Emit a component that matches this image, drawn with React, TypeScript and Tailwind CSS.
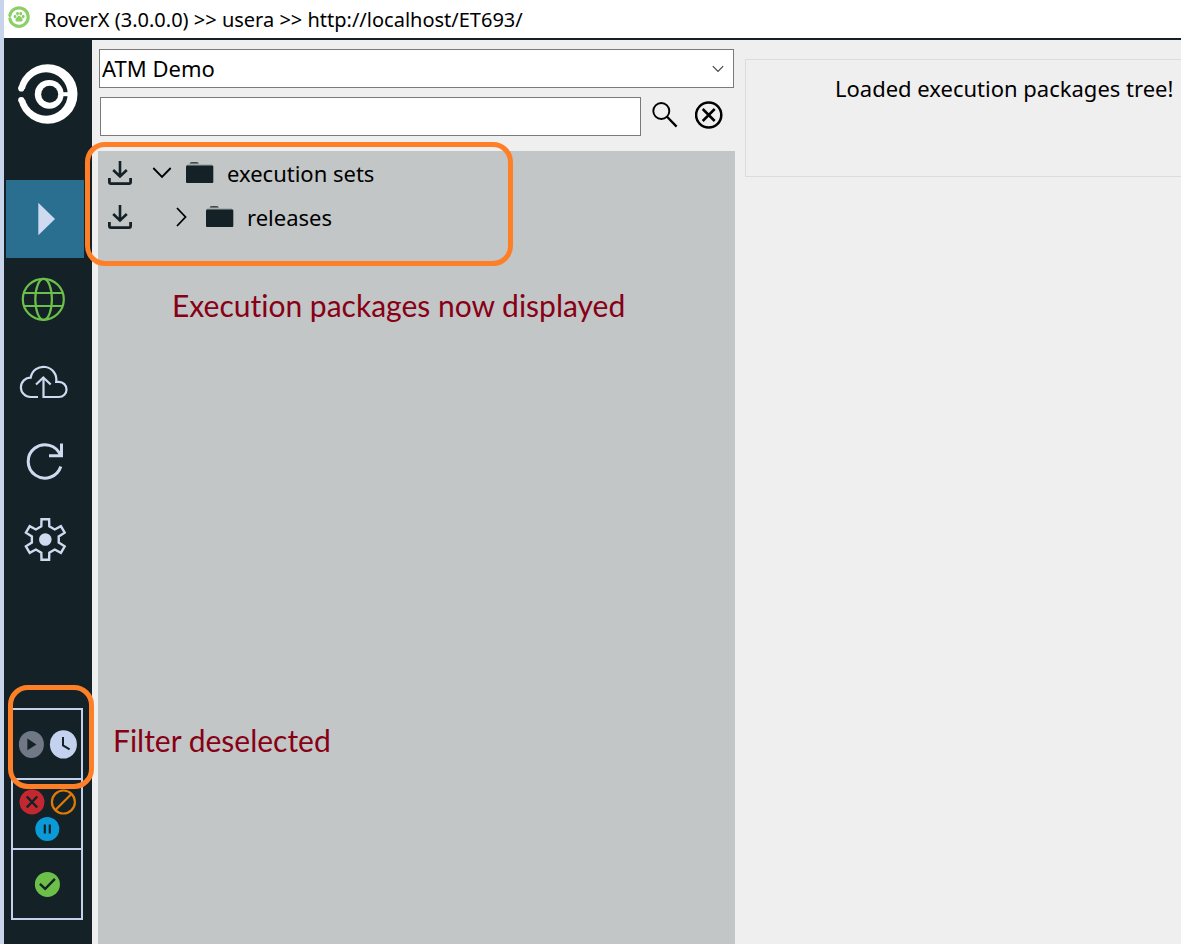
import { useState, type ReactNode } from 'react';

function PawIcon() {
  return (
    <svg width="22" height="22" viewBox="0 0 22 22" aria-hidden="true">
      <path d="M1.9 9.4A9.2 9.2 0 1 1 1.9 12.8" fill="none" stroke="#8ccf66" strokeWidth="3.2" strokeLinecap="round" />
      <g fill="#8ccf66">
        <ellipse cx="7" cy="10.6" rx="1.4" ry="1.8" />
        <ellipse cx="9.5" cy="7.6" rx="1.4" ry="1.9" />
        <ellipse cx="12.7" cy="7.6" rx="1.4" ry="1.9" />
        <ellipse cx="15.2" cy="10.6" rx="1.4" ry="1.8" />
        <path d="M11.1 10c1.9 0 3.6 2.6 3.6 4.1 0 1.9-2.1 1.5-3.6 1.5s-3.6.4-3.6-1.5c0-1.5 1.7-4.1 3.6-4.1z" />
      </g>
    </svg>
  );
}

function LogoIcon() {
  return (
    <svg width="60" height="60" viewBox="0 0 60 60" aria-hidden="true">
      <circle cx="29.7" cy="30" r="29.8" fill="#fff" />
      <circle cx="28" cy="30" r="21.7" fill="#142126" />
      <path d="M-1 25H8.5V35.5H-1z" fill="#142126" />
      <circle cx="3.3" cy="24.4" r="3.1" fill="#fff" />
      <circle cx="3.3" cy="36" r="3.1" fill="#fff" />
      <circle cx="31.2" cy="30.3" r="14.4" fill="#fff" />
      <path d="M44 28.2H51V32.2H44z" fill="#fff" />
      <circle cx="31.7" cy="30.3" r="8.5" fill="#142126" />
    </svg>
  );
}

function NavIcon({ children }: { children: ReactNode }) {
  return (
    <svg className="size-full" viewBox="0 0 78 78" fill="none" aria-hidden="true">
      {children}
    </svg>
  );
}

// six teeth, each the same profile turned by 60 degrees
const gearPoints = Array.from({ length: 6 })
  .flatMap((_, i) => {
    const a = (i * Math.PI) / 3;
    return [[-4, -13.2], [-3.8, -20.2], [3.8, -20.2], [4, -13.2]].map(
      ([x, y]) => `${39.3 + x * Math.cos(a) - y * Math.sin(a)},${39.5 + x * Math.sin(a) + y * Math.cos(a)}`
    );
  })
  .join(' ');

const navItems = [
  {
    id: 'run',
    label: 'Run',
    icon: <path d="M32.3 22.7L49 39L32.3 55.3z" fill="#cddaf0" />,
  },
  {
    id: 'web',
    label: 'Web',
    icon: (
      <g stroke="#6cc04a" strokeWidth="2.2">
        <circle cx="37.3" cy="39.3" r="20.5" />
        <ellipse cx="37.6" cy="39.3" rx="8.3" ry="20.5" />
        <path d="M18 33H57M18 46H57" />
      </g>
    ),
  },
  {
    id: 'upload',
    label: 'Upload',
    icon: (
      <g stroke="#cddaf0" strokeWidth="2.2">
        <path d="M32 57H24.5A9.7 9.7 0 0 1 24.7 37.6A12.9 12.9 0 1 1 50.2 41.9H53A7.5 7.5 0 0 1 53 57H37.5V38" />
        <path d="M30 44.5L37.3 37.5L44.7 44.5" />
      </g>
    ),
  },
  {
    id: 'refresh',
    label: 'Refresh',
    icon: (
      <g stroke="#cddaf0" strokeWidth="3">
        <path d="M54.8 46.5A16.7 16.7 0 1 1 54.5 35.5" />
        <path d="M55.5 23.5V35.7H43" />
      </g>
    ),
  },
  {
    id: 'settings',
    label: 'Settings',
    icon: (
      <g>
        <polygon points={gearPoints} stroke="#cddaf0" strokeWidth="2.4" />
        <circle cx="39.3" cy="39.5" r="6.3" fill="#cddaf0" />
      </g>
    ),
  },
];

function StatusIcon({ children }: { children: ReactNode }) {
  return (
    <svg width="26" height="26" viewBox="0 0 26 26" fill="none" overflow="visible" aria-hidden="true">
      {children}
    </svg>
  );
}

function StatusFilters() {
  return (
    <div className="relative w-[72px]">
      <div className="border-2 border-[#c3d1ec]">
        <button type="button" aria-label="Running and waiting" className="flex h-[70px] w-full items-center justify-center gap-1.5 border-b-2 border-[#c3d1ec]">
          <StatusIcon>
            <ellipse cx="13.4" cy="13.4" rx="12.5" ry="13.5" fill="#6f7884" />
            <path d="M9.4 7.6L18.4 13.4L9.4 19.2z" fill="#142126" />
          </StatusIcon>
          <StatusIcon>
            <ellipse cx="13.4" cy="13.4" rx="13.5" ry="14.2" fill="#c5d2ef" />
            <path d="M13 6V14.4L19.6 18.4" stroke="#142126" strokeWidth="2" />
          </StatusIcon>
        </button>
        <button type="button" aria-label="Failed, blocked and paused" className="flex h-[70px] w-full flex-wrap content-center justify-center gap-x-1.5 border-b-2 border-[#c3d1ec]">
          <StatusIcon>
            <circle cx="14" cy="14" r="12.5" fill="#c1282f" />
            <path d="M8.8 8.5L19.2 19.5M19.2 8.5L8.8 19.5" stroke="#142126" strokeWidth="2.4" />
          </StatusIcon>
          <StatusIcon>
            <circle cx="13.4" cy="14" r="11.5" stroke="#de7b06" strokeWidth="2.2" />
            <path d="M5.4 22L21.4 6" stroke="#de7b06" strokeWidth="2.2" />
          </StatusIcon>
          <StatusIcon>
            <circle cx="13.3" cy="15" r="12" fill="#0a9ad8" />
            <path d="M10.8 10.5V19.5M15.8 10.5V19.5" stroke="#142126" strokeWidth="2.2" />
          </StatusIcon>
        </button>
        <button type="button" aria-label="Passed" className="flex h-[68px] w-full items-center justify-center">
          <StatusIcon>
            <circle cx="13.4" cy="13.4" r="12.5" fill="#6cc04a" />
            <path d="M5.9 12.9L11.2 17.9L20.9 7.9" stroke="#142126" strokeWidth="2.4" />
          </StatusIcon>
        </button>
      </div>
      <div className="pointer-events-none absolute -top-[23px] -left-[3px] h-[104px] w-[86px] rounded-[20px] border-5 border-[#ff7f27]"></div>
    </div>
  );
}

function Sidebar() {
  const [active, setActive] = useState('run');

  return (
    <aside className="flex w-[88px] shrink-0 flex-col bg-[#142126]">
      <div className="pt-6 pl-[14px]">
        <LogoIcon />
      </div>
      <nav className="mt-14 flex flex-col gap-0.5 pl-0.5">
        {navItems.map((item) => (
          <button
            key={item.id}
            type="button"
            aria-label={item.label}
            onClick={() => setActive(item.id)}
            className={item.id === active ? 'size-[78px] bg-[#2a6f8f]' : 'size-[78px]'}
          >
            <NavIcon>{item.icon}</NavIcon>
          </button>
        ))}
      </nav>
      <div className="mt-auto pb-6 pl-[7px]">
        <StatusFilters />
      </div>
    </aside>
  );
}

function TreeRow({ label, open, nested }: { label: string; open?: boolean; nested?: boolean }) {
  return (
    <li className="flex h-11 items-center pl-[10px]">
      <button type="button" aria-label={`Download ${label}`}>
        <svg width="24" height="24" viewBox="0 0 24 24" fill="none" stroke="#142126" strokeWidth="2.8" aria-hidden="true">
          <path d="M1.4 17V21Q1.4 22.6 3 22.6H21Q22.6 22.6 22.6 21V17" />
          <path d="M12 0V15.5M5.2 9L12 15.5L18.8 9" strokeWidth="2.6" />
        </svg>
      </button>
      <div className={nested ? 'flex items-center pl-9' : 'flex items-center pl-4'}>
        <button type="button" aria-label={open ? 'Collapse' : 'Expand'} aria-expanded={!!open}>
          <svg width="28" height="28" viewBox="0 0 28 28" fill="none" stroke="#000" strokeWidth="1.8" aria-hidden="true">
            {open ? <path d="M5.3 9L14 18L22.7 9" /> : <path d="M9 5L17.5 14L9 23" />}
          </svg>
        </button>
        <svg className="ml-[10px]" width="28" height="22" viewBox="0 0 28 22" fill="#142126" aria-hidden="true">
          <path d="M3.5 1.5Q4 .2 6 .2H10.5Q12.3 .2 12.8 1.5z" />
          <path d="M1 2.6H26V3.6H1z" opacity=".35" />
          <rect y="3.6" width="27.3" height="17.4" rx="1" />
        </svg>
        <span className="ml-[13px] text-[22px]">{label}</span>
      </div>
    </li>
  );
}

function PackagesPanel() {
  return (
    <section className="flex w-3/5 max-w-[643px] flex-col pt-[9px]">
      <div className="relative mr-px ml-[7px]">
        <select aria-label="Project" className="block h-[39px] w-full appearance-none border border-[#7a7a7a] bg-white pl-0.5 text-[22px] text-black">
          <option>ATM Demo</option>
        </select>
        <svg className="pointer-events-none absolute top-[14px] right-[10px]" width="12" height="12" viewBox="0 0 12 12" fill="none" stroke="#444" strokeWidth="1.2" aria-hidden="true">
          <path d="M.8 3.2L6 8.4L11.2 3.2" />
        </svg>
      </div>
      <div className="mt-[9px] flex items-start pr-1 pl-2">
        <input type="text" aria-label="Search packages" className="h-[39px] min-w-0 flex-1 border border-[#7a7a7a] bg-white px-1 text-[22px]" />
        <button type="button" aria-label="Search" className="ml-0.5 flex h-9 w-11 items-center justify-center">
          <svg width="26" height="26" viewBox="0 0 26 26" fill="none" stroke="#000" aria-hidden="true">
            <circle cx="9.3" cy="9" r="8" strokeWidth="1.9" />
            <path d="M14.8 14.5L24.6 24.6" strokeWidth="2.3" />
          </svg>
        </button>
        <button type="button" aria-label="Clear" className="flex h-9 w-11 items-center justify-center">
          <svg width="28" height="28" viewBox="0 0 28 28" fill="none" stroke="#000" strokeWidth="2.5" aria-hidden="true">
            <circle cx="13.7" cy="14" r="12.6" />
            <path d="M7.7 8L19.7 20M19.7 8L7.7 20" />
          </svg>
        </button>
      </div>
      <div className="relative mt-[15px] ml-1.5 flex flex-1 flex-col bg-[#c2c6c6]">
        <ul>
          <TreeRow label="execution sets" open />
          <TreeRow label="releases" nested />
        </ul>
        <div className="pointer-events-none absolute -top-[9px] -left-[13px] h-[124px] w-[428px] rounded-[20px] border-5 border-[#ff7f27]"></div>
        <p className="mt-[46px] pl-[74px] font-[Lato,sans-serif] text-[30px] leading-10 text-[#880015] [font-variant-ligatures:none]">
          Execution packages now displayed
        </p>
        <p className="mt-auto mb-[184px] pl-[15px] font-[Lato,sans-serif] text-[30px] leading-10 text-[#880015] [font-variant-ligatures:none]">
          Filter deselected
        </p>
      </div>
    </section>
  );
}

export default function App() {
  return (
    <div className="flex min-h-screen flex-col overflow-hidden border-l-4 border-[#c8d4ea] bg-[#efefef] font-['Noto_Sans',sans-serif] text-black">
      <header className="flex h-10 items-center border-b-2 border-[#142126] bg-white pl-1">
        <div className="mb-1">
          <PawIcon />
        </div>
        <h1 className="ml-3.5 pt-0.5 text-[20px] whitespace-nowrap">
          RoverX (3.0.0.0) &gt;&gt; usera &gt;&gt; http://localhost/ET693/
        </h1>
      </header>
      <main className="flex flex-1">
        <Sidebar />
        <PackagesPanel />
        <section className="min-w-0 flex-1 pt-[19px] pl-[10px]">
          <div className="min-h-[118px] border border-r-0 border-[#dcdcdc] pt-3 pl-[89px]" role="status">
            <p className="text-[22px]">Loaded execution packages tree!</p>
          </div>
        </section>
      </main>
    </div>
  );
}
